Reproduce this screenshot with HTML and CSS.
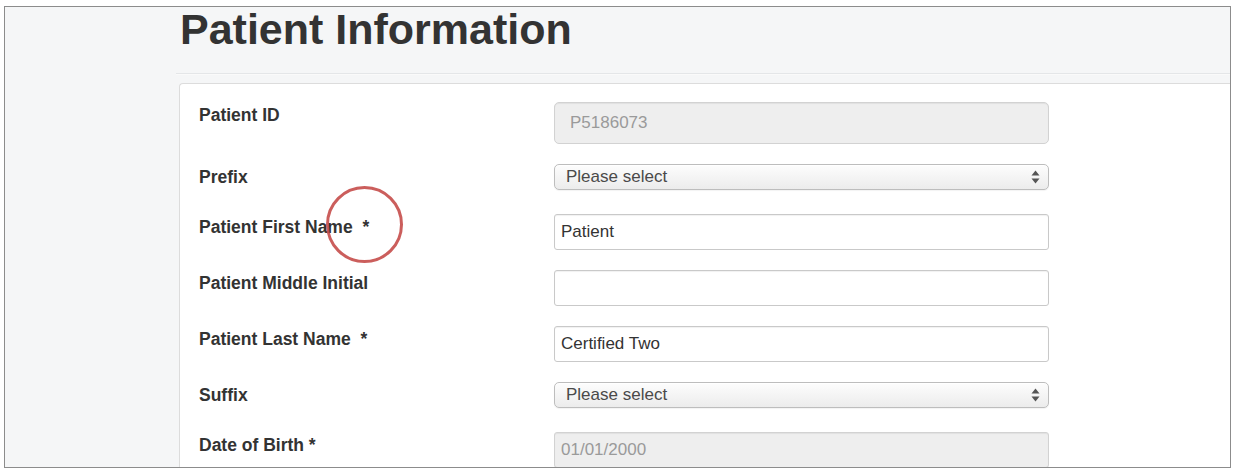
FILE: index.html
```html
<!DOCTYPE html>
<html lang="en">
<head>
<meta charset="utf-8">
<title>Patient Information</title>
<link rel="stylesheet" href="styles.css">
</head>
<body>
<div class="frame">
  <div class="page">
    <h1 class="title">Patient Information</h1>
    <div class="rule"></div>
    <div class="card">
      <form class="form">
        <div class="label">Patient ID</div>
        <div class="control"><input class="input input-id" type="text" value="P5186073" disabled></div>

        <div class="label">Prefix</div>
        <div class="control select-row">
          <div class="select"><span>Please select</span>
            <svg class="arrows" width="9" height="14" viewBox="0 0 9 14"><path d="M4.5 0.5 L8.5 5.5 L0.5 5.5 Z M4.5 13.5 L8.5 8.5 L0.5 8.5 Z" fill="#555"/></svg>
          </div>
        </div>

        <div class="label">Patient First Name&nbsp; *</div>
        <div class="control"><input class="input" type="text" value="Patient"></div>

        <div class="label">Patient Middle Initial</div>
        <div class="control"><input class="input" type="text" value=""></div>

        <div class="label">Patient Last Name&nbsp; *</div>
        <div class="control"><input class="input" type="text" value="Certified Two"></div>

        <div class="label">Suffix</div>
        <div class="control select-row">
          <div class="select"><span>Please select</span>
            <svg class="arrows" width="9" height="14" viewBox="0 0 9 14"><path d="M4.5 0.5 L8.5 5.5 L0.5 5.5 Z M4.5 13.5 L8.5 8.5 L0.5 8.5 Z" fill="#555"/></svg>
          </div>
        </div>

        <div class="label">Date of Birth *</div>
        <div class="control"><input class="input" type="text" value="01/01/2000" disabled></div>
      </form>
      <div class="annotation"></div>
    </div>
  </div>
</div>
</body>
</html>
```

FILE: styles.css
```css
* { box-sizing: border-box; }

html, body {
  margin: 0;
  padding: 0;
  background: #ffffff;
}

body {
  font-family: "Liberation Sans", Arial, Helvetica, sans-serif;
  color: #333333;
  padding: 6px 0 0 4px;
}

.frame {
  width: 1227px;
  height: 462px;
  border: 1px solid #8c8c8c;
  background: #f5f6f7;
  overflow: hidden;
}

.page {
  padding: 0 0 0 174px;
}

.title {
  margin: -2px 0 0 1px;
  font-size: 43px;
  line-height: 48px;
  font-weight: bold;
  color: #333333;
  letter-spacing: 0;
}

.rule {
  margin: 20px 0 0 -3px;
  height: 2px;
  border-top: 1px solid #e4e6e8;
  background: #fafafa;
}

.card {
  position: relative;
  margin-top: 8px;
  background: #ffffff;
  border: 1px solid #dcdcdc;
  border-right: none;
  border-top-left-radius: 4px;
  height: 600px;
}

.form {
  display: grid;
  grid-template-columns: 355px 495px;
  row-gap: 20px;
  padding: 18px 0 0 19px;
  margin: 0;
}

.label {
  font-size: 17.5px;
  font-weight: bold;
  line-height: 26px;
  color: #333333;
}

.control {
  display: flex;
  flex-direction: column;
}

.input {
  width: 495px;
  height: 36px;
  margin: 0;
  padding: 0 6px;
  font-family: "Liberation Sans", Arial, Helvetica, sans-serif;
  font-size: 17px;
  color: #333333;
  background: #ffffff;
  border: 1px solid #c9c9c9;
  border-radius: 3px;
  box-shadow: inset 0 1px 1px rgba(0, 0, 0, 0.06);
  outline: none;
}

.input:disabled {
  background: #eeeeee;
  color: #9a9a9a;
  -webkit-text-fill-color: #9a9a9a;
  opacity: 1;
  border-color: #d2d2d2;
}

.input-id {
  height: 42px;
  padding-left: 15px;
  border-radius: 5px;
}

.select-row {
  height: 30px;
}

.select {
  width: 495px;
  height: 26px;
  display: flex;
  align-items: center;
  justify-content: space-between;
  padding: 0 8px 0 11px;
  font-size: 17px;
  color: #4a4a4a;
  border: 1px solid #bdbdbd;
  border-radius: 5px;
  background: linear-gradient(#fdfdfd, #ececec);
  box-shadow: inset 0 1px 0 #ffffff, 0 1px 1px rgba(0, 0, 0, 0.05);
}

.select span {
  line-height: 24px;
}

.arrows {
  display: block;
}

.annotation {
  position: absolute;
  left: 146px;
  top: 102px;
  width: 77px;
  height: 77px;
  border: 3px solid rgba(196, 72, 70, 0.88);
  border-radius: 50%;
}
```
